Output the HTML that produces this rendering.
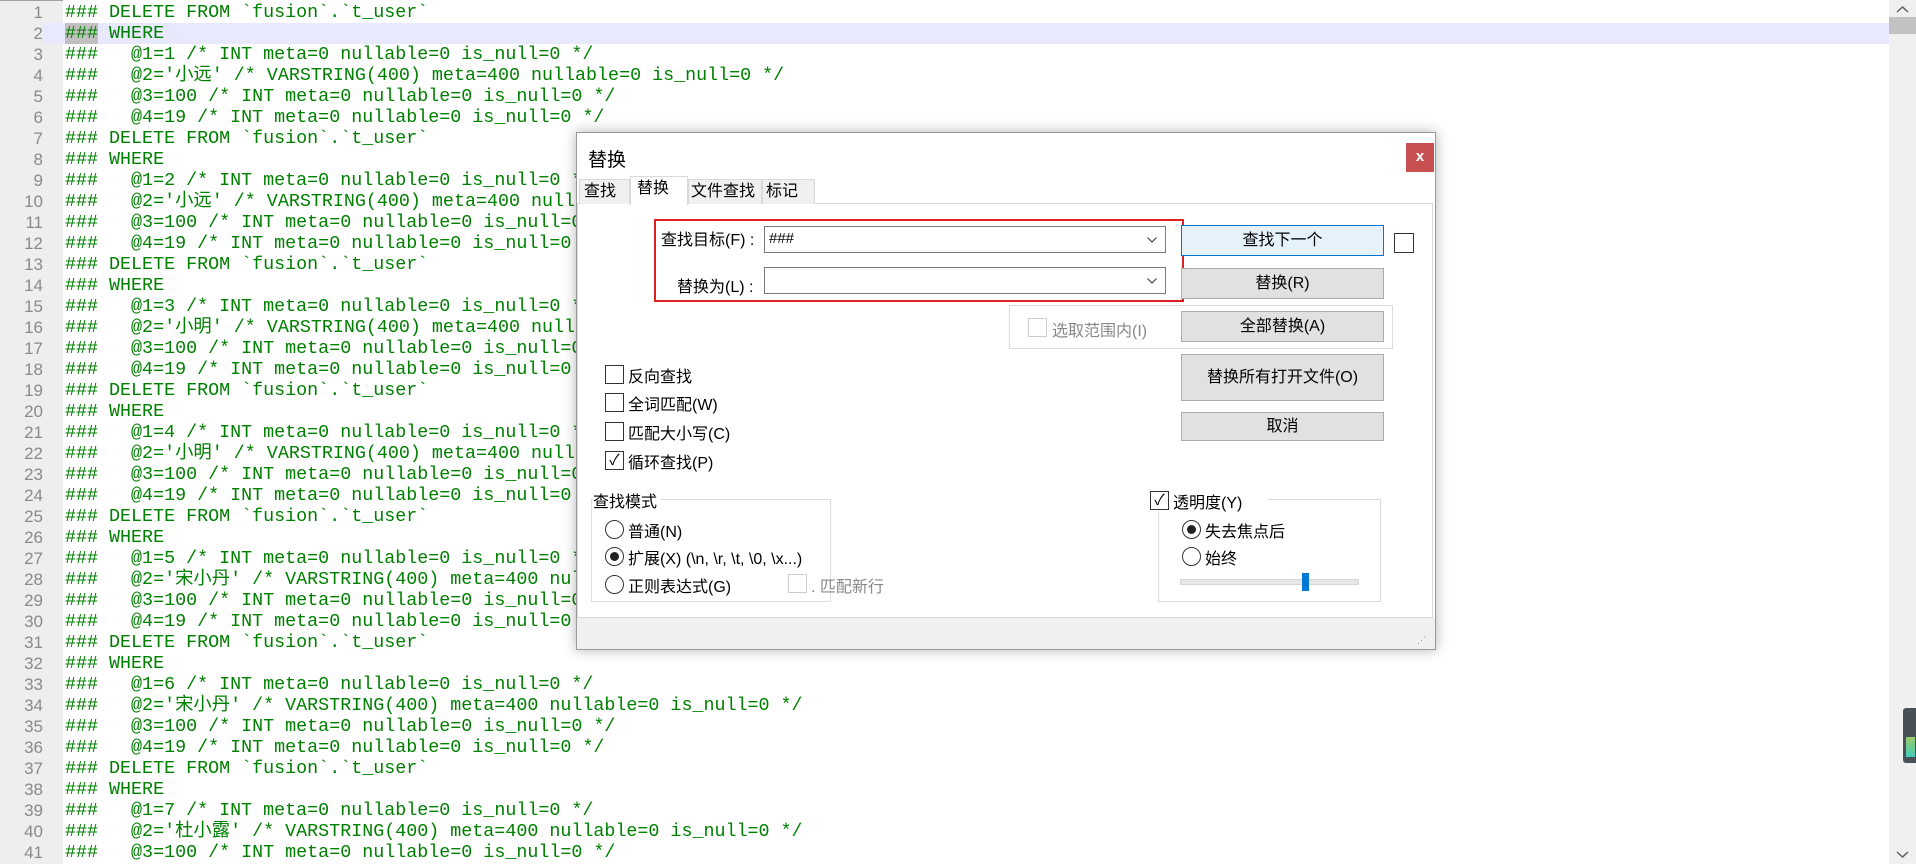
<!DOCTYPE html>
<html><head><meta charset="utf-8"><style>
*{margin:0;padding:0;box-sizing:border-box}
body{width:1916px;height:864px;overflow:hidden;background:#fff;position:relative;font-family:"Liberation Sans","Noto Sans CJK SC",sans-serif}
#gut{position:absolute;left:0;top:0;width:63px;height:864px;background:#eeeeee;border-top:1px solid #a0a0a0}
#code{position:absolute;left:0;top:2px;width:1889px}
.l{position:relative;height:21px;line-height:21px;white-space:pre;font-family:"Liberation Mono","Noto Sans CJK SC",monospace;font-size:18.35px;color:#008000}
.l .n{position:absolute;left:0;width:43px;text-align:right;color:#8a8a8a;font-family:"Liberation Sans",sans-serif;font-size:17px}
.l .t{position:absolute;left:65px}
.hl{background:#e8e8ff}
.hl .n{background:#eeeeee}
.sel{background:#c0c0c0}
#sb{position:absolute;left:1889px;top:0;width:27px;height:864px;background:#f0f0f0}
.dlg{position:absolute;left:576px;top:132px;width:860px;height:518px;background:#f0f0f0;border:1px solid #9a9a9a;box-shadow:0 0 12px rgba(0,0,0,.3);font-size:15.5px;color:#000}
.a{position:absolute}
.btn{position:absolute;left:604px;width:203px;background:#e1e1e1;border:1px solid #adadad;text-align:center;font-size:16px}
.cb{position:absolute;width:19px;height:19px;border:1px solid #333;background:#fff}
.rd{position:absolute;width:19px;height:19px;border:1px solid #333;border-radius:50%;background:#fff}
.lbl{position:absolute;font-size:16px;white-space:nowrap}
</style></head><body>
<div id="gut"></div>
<div id="code">
<div class="l"><span class="n">1</span><span class="t">### DELETE FROM `fusion`.`t_user`</span></div>
<div class="l hl"><span class="n">2</span><span class="t"><span class="sel">###</span> WHERE</span></div>
<div class="l"><span class="n">3</span><span class="t">###   @1=1 /* INT meta=0 nullable=0 is_null=0 */</span></div>
<div class="l"><span class="n">4</span><span class="t">###   @2='小远' /* VARSTRING(400) meta=400 nullable=0 is_null=0 */</span></div>
<div class="l"><span class="n">5</span><span class="t">###   @3=100 /* INT meta=0 nullable=0 is_null=0 */</span></div>
<div class="l"><span class="n">6</span><span class="t">###   @4=19 /* INT meta=0 nullable=0 is_null=0 */</span></div>
<div class="l"><span class="n">7</span><span class="t">### DELETE FROM `fusion`.`t_user`</span></div>
<div class="l"><span class="n">8</span><span class="t">### WHERE</span></div>
<div class="l"><span class="n">9</span><span class="t">###   @1=2 /* INT meta=0 nullable=0 is_null=0 */</span></div>
<div class="l"><span class="n">10</span><span class="t">###   @2='小远' /* VARSTRING(400) meta=400 nullable=0 is_null=0 */</span></div>
<div class="l"><span class="n">11</span><span class="t">###   @3=100 /* INT meta=0 nullable=0 is_null=0 */</span></div>
<div class="l"><span class="n">12</span><span class="t">###   @4=19 /* INT meta=0 nullable=0 is_null=0 */</span></div>
<div class="l"><span class="n">13</span><span class="t">### DELETE FROM `fusion`.`t_user`</span></div>
<div class="l"><span class="n">14</span><span class="t">### WHERE</span></div>
<div class="l"><span class="n">15</span><span class="t">###   @1=3 /* INT meta=0 nullable=0 is_null=0 */</span></div>
<div class="l"><span class="n">16</span><span class="t">###   @2='小明' /* VARSTRING(400) meta=400 nullable=0 is_null=0 */</span></div>
<div class="l"><span class="n">17</span><span class="t">###   @3=100 /* INT meta=0 nullable=0 is_null=0 */</span></div>
<div class="l"><span class="n">18</span><span class="t">###   @4=19 /* INT meta=0 nullable=0 is_null=0 */</span></div>
<div class="l"><span class="n">19</span><span class="t">### DELETE FROM `fusion`.`t_user`</span></div>
<div class="l"><span class="n">20</span><span class="t">### WHERE</span></div>
<div class="l"><span class="n">21</span><span class="t">###   @1=4 /* INT meta=0 nullable=0 is_null=0 */</span></div>
<div class="l"><span class="n">22</span><span class="t">###   @2='小明' /* VARSTRING(400) meta=400 nullable=0 is_null=0 */</span></div>
<div class="l"><span class="n">23</span><span class="t">###   @3=100 /* INT meta=0 nullable=0 is_null=0 */</span></div>
<div class="l"><span class="n">24</span><span class="t">###   @4=19 /* INT meta=0 nullable=0 is_null=0 */</span></div>
<div class="l"><span class="n">25</span><span class="t">### DELETE FROM `fusion`.`t_user`</span></div>
<div class="l"><span class="n">26</span><span class="t">### WHERE</span></div>
<div class="l"><span class="n">27</span><span class="t">###   @1=5 /* INT meta=0 nullable=0 is_null=0 */</span></div>
<div class="l"><span class="n">28</span><span class="t">###   @2='宋小丹' /* VARSTRING(400) meta=400 nullable=0 is_null=0 */</span></div>
<div class="l"><span class="n">29</span><span class="t">###   @3=100 /* INT meta=0 nullable=0 is_null=0 */</span></div>
<div class="l"><span class="n">30</span><span class="t">###   @4=19 /* INT meta=0 nullable=0 is_null=0 */</span></div>
<div class="l"><span class="n">31</span><span class="t">### DELETE FROM `fusion`.`t_user`</span></div>
<div class="l"><span class="n">32</span><span class="t">### WHERE</span></div>
<div class="l"><span class="n">33</span><span class="t">###   @1=6 /* INT meta=0 nullable=0 is_null=0 */</span></div>
<div class="l"><span class="n">34</span><span class="t">###   @2='宋小丹' /* VARSTRING(400) meta=400 nullable=0 is_null=0 */</span></div>
<div class="l"><span class="n">35</span><span class="t">###   @3=100 /* INT meta=0 nullable=0 is_null=0 */</span></div>
<div class="l"><span class="n">36</span><span class="t">###   @4=19 /* INT meta=0 nullable=0 is_null=0 */</span></div>
<div class="l"><span class="n">37</span><span class="t">### DELETE FROM `fusion`.`t_user`</span></div>
<div class="l"><span class="n">38</span><span class="t">### WHERE</span></div>
<div class="l"><span class="n">39</span><span class="t">###   @1=7 /* INT meta=0 nullable=0 is_null=0 */</span></div>
<div class="l"><span class="n">40</span><span class="t">###   @2='杜小露' /* VARSTRING(400) meta=400 nullable=0 is_null=0 */</span></div>
<div class="l"><span class="n">41</span><span class="t">###   @3=100 /* INT meta=0 nullable=0 is_null=0 */</span></div>
</div>
<div id="sb">
 <svg class="a" style="left:7px;top:5px" width="13" height="8"><path d="M1 7 L6.5 2 L12 7" stroke="#606060" stroke-width="1.5" fill="none"/></svg>
 <div class="a" style="left:0;top:17px;width:27px;height:17px;background:#c2c2c2"></div>
 <div class="a" style="left:14px;top:708px;width:13px;height:55px;background:#4a5058;border-radius:3px 0 0 3px"></div>
 <div class="a" style="left:17px;top:737px;width:9px;height:20px;background:linear-gradient(#9c6,#4cb)"></div>
 <svg class="a" style="left:7px;top:851px" width="13" height="8"><path d="M1 1 L6.5 6 L12 1" stroke="#606060" stroke-width="1.5" fill="none"/></svg>
</div>

<div class="dlg">
 <div class="a" style="left:0;top:0;width:858px;height:485px;background:#fff"></div>
 <div class="lbl" style="left:11px;top:12px;font-size:19px">替换</div>
 <div class="a" style="left:829px;top:10px;width:28px;height:29px;background:#c75050;color:#fff;text-align:center;line-height:28px;font-size:15px;font-weight:bold">x</div>
 <div class="a" style="left:0;top:485px;width:858px;height:31px;background:#f0f0f0"></div>
 <div class="a" style="left:0;top:70px;width:856px;height:415px;background:#fff;border:1px solid #d9d9d9"></div>
 <div class="a" style="left:2px;top:46px;width:51px;height:25px;background:#f0f0f0;border:1px solid #d9d9d9;border-bottom:none;padding-left:4px;font-size:16px;line-height:23px">查找</div>
 <div class="a" style="left:53px;top:43px;width:58px;height:29px;background:#fff;border:1px solid #d9d9d9;border-bottom:none;padding-left:6px;font-size:16px;line-height:24px">替换</div>
 <div class="a" style="left:111px;top:46px;width:74px;height:25px;background:#f0f0f0;border:1px solid #d9d9d9;border-bottom:none;padding-left:2px;font-size:16px;line-height:23px">文件查找</div>
 <div class="a" style="left:185px;top:46px;width:53px;height:25px;background:#f0f0f0;border:1px solid #d9d9d9;border-bottom:none;padding-left:3px;font-size:16px;line-height:23px">标记</div>
 <div class="a" style="left:77px;top:86px;width:530px;height:83px;border:2px solid #e02020"></div>
 <div class="lbl" style="left:84px;top:93px">查找目标(F) :</div>
 <div class="a" style="left:187px;top:93px;width:402px;height:27px;border:1px solid #7a7a7a;background:#fff;padding-left:4px;line-height:24px;font-size:15px">###<svg style="position:absolute;right:8px;top:10px" width="10" height="6"><path d="M0.5 0.5 L5 5 L9.5 0.5" stroke="#333" fill="none"/></svg></div>
 <div class="lbl" style="left:100px;top:140px">替换为(L) :</div>
 <div class="a" style="left:187px;top:134px;width:402px;height:27px;border:1px solid #7a7a7a;background:#fff"><svg style="position:absolute;right:8px;top:10px" width="10" height="6"><path d="M0.5 0.5 L5 5 L9.5 0.5" stroke="#333" fill="none"/></svg></div>
 <div class="btn" style="top:92px;height:31px;line-height:29px;background:#e5f1fb;border-color:#0078d7">查找下一个</div>
 <div class="cb" style="left:817px;top:100px;width:20px;height:20px"></div>
 <div class="btn" style="top:135px;height:31px;line-height:29px">替换(R)</div>
 <div class="a" style="left:432px;top:172px;width:384px;height:44px;border:1px solid #dcdcdc"></div>
 <div class="cb" style="left:451px;top:185px;border-color:#ccc"></div>
 <div class="lbl" style="left:475px;top:184px;color:#888">选取范围内(I)</div>
 <div class="btn" style="top:178px;height:31px;line-height:29px">全部替换(A)</div>
 <div class="btn" style="top:221px;height:47px;line-height:45px">替换所有打开文件(O)</div>
 <div class="btn" style="top:279px;height:29px;line-height:27px">取消</div>
 <div class="cb" style="left:28px;top:232px"></div><div class="lbl" style="left:51px;top:230px">反向查找</div>
 <div class="cb" style="left:28px;top:260px"></div><div class="lbl" style="left:51px;top:258px">全词匹配(W)</div>
 <div class="cb" style="left:28px;top:289px"></div><div class="lbl" style="left:51px;top:287px">匹配大小写(C)</div>
 <div class="cb" style="left:28px;top:318px;line-height:17px;text-align:center;font-size:15px">✓</div><div class="lbl" style="left:51px;top:316px">循环查找(P)</div>
 <div class="a" style="left:14px;top:366px;width:240px;height:103px;border:1px solid #dcdcdc"></div>
 <div class="lbl" style="left:16px;top:355px;background:#fff;padding-right:3px">查找模式</div>
 <div class="rd" style="left:28px;top:387px"></div><div class="lbl" style="left:51px;top:385px">普通(N)</div>
 <div class="rd" style="left:28px;top:414px"></div><div class="a" style="left:33px;top:419px;width:9px;height:9px;border-radius:50%;background:#222"></div><div class="lbl" style="left:51px;top:412px">扩展(X) (\n, \r, \t, \0, \x...)</div>
 <div class="rd" style="left:28px;top:442px"></div><div class="lbl" style="left:51px;top:440px">正则表达式(G)</div>
 <div class="cb" style="left:211px;top:441px;border-color:#ccc"></div><div class="lbl" style="left:234px;top:440px;color:#888">. 匹配新行</div>
 <div class="a" style="left:581px;top:366px;width:223px;height:103px;border:1px solid #dcdcdc"></div>
 <div class="a" style="left:571px;top:356px;width:120px;height:22px;background:#fff"></div>
 <div class="cb" style="left:573px;top:358px;line-height:17px;text-align:center;font-size:15px">✓</div><div class="lbl" style="left:596px;top:356px">透明度(Y)</div>
 <div class="rd" style="left:605px;top:387px"></div><div class="a" style="left:610px;top:392px;width:9px;height:9px;border-radius:50%;background:#222"></div><div class="lbl" style="left:628px;top:385px">失去焦点后</div>
 <div class="rd" style="left:605px;top:414px"></div><div class="lbl" style="left:628px;top:412px">始终</div>
 <div class="a" style="left:603px;top:446px;width:179px;height:6px;background:#e7e7e7;border:1px solid #d6d6d6"></div>
 <div class="a" style="left:725px;top:440px;width:7px;height:18px;background:#0078d7"></div>
 <div class="a" style="left:840px;top:502px;font-size:9px;color:#999">⋰</div>
</div>
</body></html>
